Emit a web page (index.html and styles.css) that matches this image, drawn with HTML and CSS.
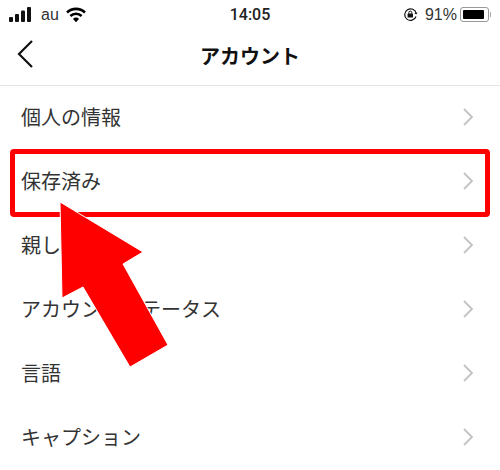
FILE: index.html
```html
<!DOCTYPE html>
<html lang="ja">
<head>
<meta name="viewport" content="width=device-width, initial-scale=1">
<link rel="stylesheet" href="styles.css">
</head>
<body>
<div class="phone">
  <div class="status-bar">
    <div class="status-left">
      <svg class="signal" width="22" height="15" viewBox="0 0 22 15">
        <rect x="0" y="10" width="4" height="5" rx="1"/>
        <rect x="6" y="7" width="4" height="8" rx="1"/>
        <rect x="12" y="3.5" width="4" height="11.5" rx="1"/>
        <rect x="18" y="0" width="4" height="15" rx="1"/>
      </svg>
      <span class="carrier">au</span>
      <svg class="wifi" width="20" height="16" viewBox="0 0 20 16">
        <path d="M1 5.5a13 13 0 0 1 18 0" fill="none" stroke="#000" stroke-width="2.6"/>
        <path d="M4.4 9a8.2 8.2 0 0 1 11.2 0" fill="none" stroke="#000" stroke-width="2.6"/>
        <path d="M7 12a3.8 3.8 0 0 1 6 0l-3 3.2z"/>
      </svg>
    </div>
    <div class="clock">14:05</div>
    <div class="status-right">
      <svg class="lock" width="15" height="15" viewBox="0 0 15 15">
        <path d="M13 9.5a5.8 5.8 0 1 1 .2-3" fill="none" stroke="#111" stroke-width="1.2"/>
        <path d="M14.6 5.6l-1.5 2-1.8-1.7z" fill="#111"/>
        <rect x="4.6" y="6.6" width="5.4" height="4" rx=".6" fill="#111"/>
        <path d="M5.8 6.8V5.6a1.5 1.5 0 0 1 3 0v1.2" fill="none" stroke="#111" stroke-width="1"/>
      </svg>
      <span class="percent">91%</span>
      <div class="battery"><div class="battery-level"></div></div>
      <div class="battery-tip"></div>
    </div>
  </div>

  <div class="nav-bar">
    <svg class="back" width="18" height="30" viewBox="0 0 18 30">
      <path d="M16 2L3 15l13 13" fill="none" stroke="#111" stroke-width="2.2"/>
    </svg>
    <div class="nav-title">アカウント</div>
  </div>

  <div class="menu">
    <div class="row"><span>個人の情報</span><svg class="chevron" width="11" height="18" viewBox="0 0 11 18"><path d="M1 1l8 8-8 8" /></svg></div>
    <div class="row"><span>保存済み</span><svg class="chevron" width="11" height="18" viewBox="0 0 11 18"><path d="M1 1l8 8-8 8" /></svg></div>
    <div class="row"><span>親しい友達</span><svg class="chevron" width="11" height="18" viewBox="0 0 11 18"><path d="M1 1l8 8-8 8" /></svg></div>
    <div class="row"><span>アカウントステータス</span><svg class="chevron" width="11" height="18" viewBox="0 0 11 18"><path d="M1 1l8 8-8 8" /></svg></div>
    <div class="row"><span>言語</span><svg class="chevron" width="11" height="18" viewBox="0 0 11 18"><path d="M1 1l8 8-8 8" /></svg></div>
    <div class="row"><span>キャプション</span><svg class="chevron" width="11" height="18" viewBox="0 0 11 18"><path d="M1 1l8 8-8 8" /></svg></div>
  </div>

  <!-- red annotation on top of the screenshot -->
  <div class="highlight-box"></div>
  <svg class="arrow" width="500" height="470" viewBox="0 0 500 470">
    <path d="M60 202L143 252 123 264 168 345 130 367 83 287 62 298z" fill="#fe0000" stroke="#fff" stroke-width="1"/>
  </svg>
</div>
</body>
</html>
```

FILE: styles.css
```css
html, body {
  margin: 0;
  background-color: #fff;
}

body {
  font-family: "Liberation Sans", "Noto Sans CJK JP", sans-serif;
  color: #222;
}

.phone {
  position: relative;
  width: 500px;
  height: 470px;
  overflow: hidden;
}

.status-bar {
  display: flex;
  align-items: center;
  justify-content: space-between;
  height: 28px;
  padding: 1px 9px 0;
  box-sizing: border-box;
}

.status-left {
  display: flex;
  align-items: center;
  width: 160px;
}

.signal {
  fill: #111;
}

.carrier {
  margin-left: 10px;
  font-size: 16px;
  color: #333;
}

.wifi {
  margin-left: 7px;
}

.clock {
  font-size: 16px;
  font-weight: 500;
  font-family: "Roboto", sans-serif;
  color: #222;
}

.status-right {
  display: flex;
  align-items: center;
  justify-content: flex-end;
  width: 160px;
}

.percent {
  margin-left: 7px;
  font-size: 16px;
  color: #333;
}

.battery {
  margin-left: 3px;
  width: 29px;
  height: 15px;
  padding: 2px;
  box-sizing: border-box;
  border: 1px solid #999;
  border-radius: 3px;
}

.battery-level {
  width: 91%;
  height: 100%;
  background-color: #000;
  border-radius: 1px;
}

.battery-tip {
  width: 1px;
  height: 5px;
  margin-left: 1px;
  background-color: #aaa;
}

.nav-bar {
  position: relative;
  display: flex;
  align-items: center;
  justify-content: center;
  height: 57px;
  border-bottom: 1px solid #e4e4e4;
}

.back {
  position: absolute;
  left: 16px;
  top: 11px;
}

.nav-title {
  margin-bottom: 2px;
  font-size: 20px;
  font-weight: 700;
  color: #111;
}

.row {
  display: flex;
  align-items: center;
  justify-content: space-between;
  height: 64px;
  padding: 0 26px 4px 21px;
  box-sizing: border-box;
  font-size: 20px;
  color: #333;
}

.chevron {
  margin-top: 2px;
  fill: none;
  stroke: #c2c2c2;
  stroke-width: 1.8;
}

.highlight-box {
  position: absolute;
  left: 10px;
  top: 149px;
  width: 480px;
  height: 68px;
  box-sizing: border-box;
  border: 5px solid #fe0000;
  border-radius: 4px;
}

.arrow {
  position: absolute;
  left: 0;
  top: 0;
}
```
